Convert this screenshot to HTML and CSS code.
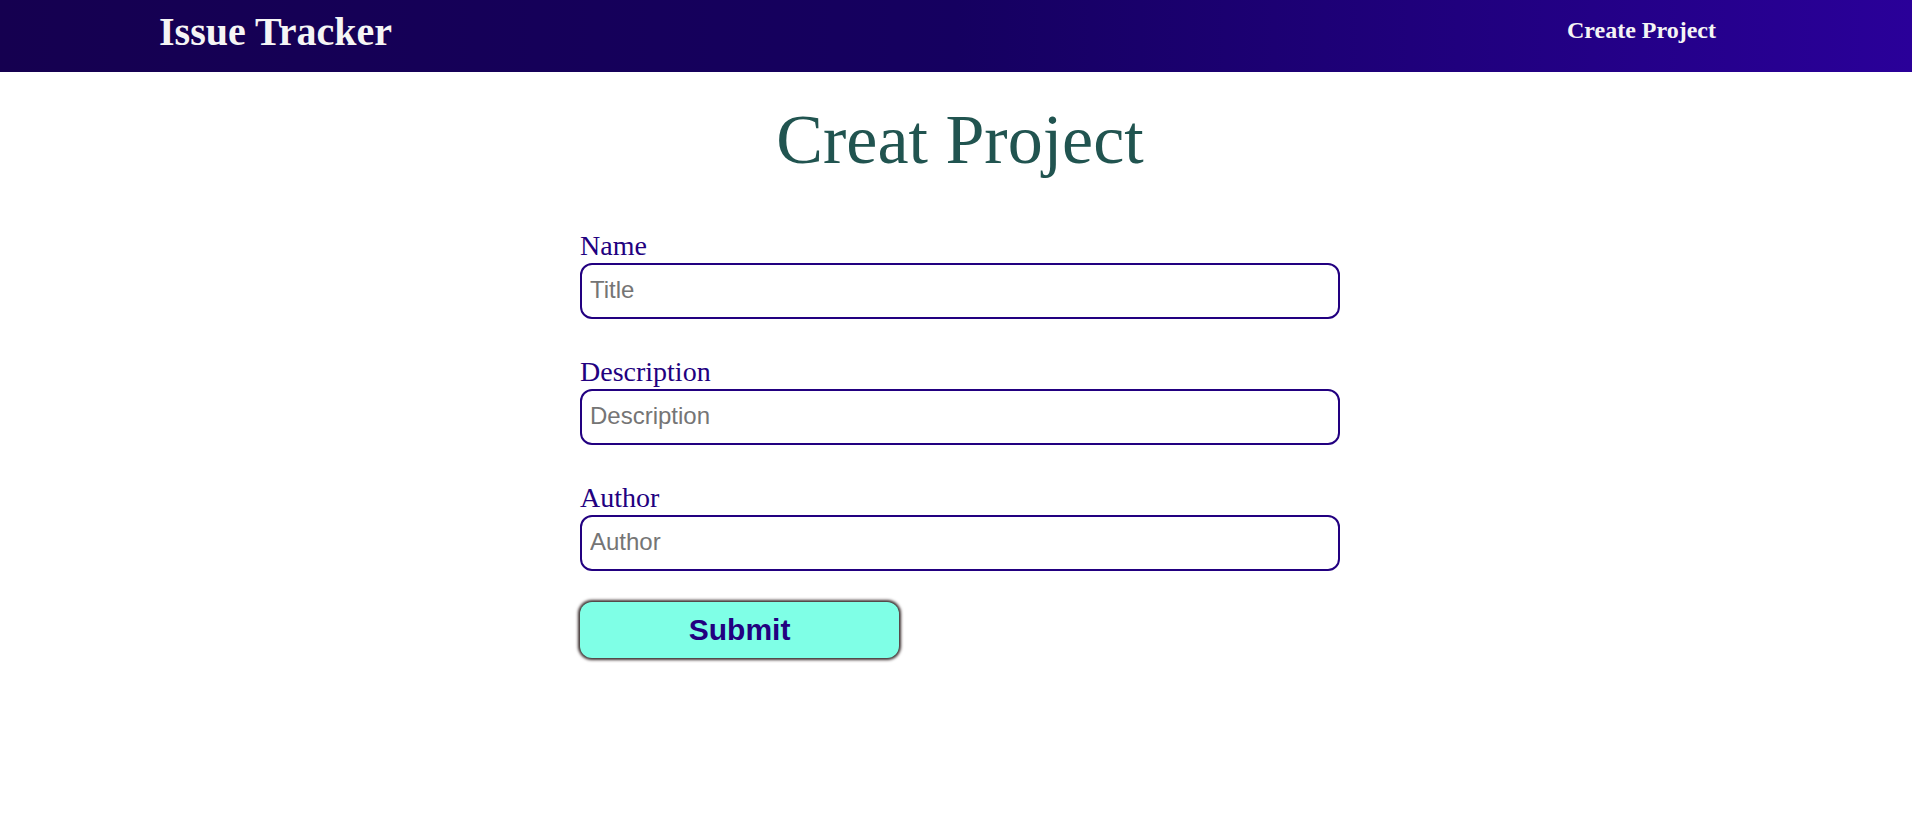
FILE: index.html
```html
<!DOCTYPE html>
<html lang="en">
<head>
<meta charset="utf-8">
<title>Issue Tracker</title>
<link rel="stylesheet" href="styles.css">
</head>
<body>
<header class="header">
  <h1 class="brand">Issue Tracker</h1>
  <nav><a class="nav-link" href="#create">Create Project</a></nav>
</header>
<main class="main" id="create">
  <h2 class="title">Creat Project</h2>
  <form class="form">
    <div class="fields">
      <div class="field">
        <label class="label" for="name">Name</label>
        <input class="input" id="name" type="text" placeholder="Title">
      </div>
      <div class="field">
        <label class="label" for="description">Description</label>
        <input class="input" id="description" type="text" placeholder="Description">
      </div>
      <div class="field">
        <label class="label" for="author">Author</label>
        <input class="input" id="author" type="text" placeholder="Author">
      </div>
    </div>
    <button class="submit" type="submit">Submit</button>
  </form>
</main>
</body>
</html>
```

FILE: styles.css
```css
* {
  box-sizing: border-box;
}

body {
  margin: 0;
  font-family: "Liberation Serif", "Times New Roman", serif;
  background: #fff;
}

.header {
  display: flex;
  justify-content: space-between;
  padding: 8px 196px 16px 159px;
  background: linear-gradient(to right, #150050, #150060 50%, #2a0099);
  color: #f5f5f5;
}

.brand {
  margin: 0;
  font-size: 40px;
  line-height: 48px;
}

.nav-link {
  color: #f5f5f5;
  font-size: 24px;
  line-height: 44px;
  font-weight: bold;
  text-decoration: none;
}

.main {
  max-width: 768px;
  margin: 0 auto;
  padding: 0 0 32px 8px;
}

.title {
  margin: 28px 0 49px;
  color: #215450;
  font-size: 70px;
  line-height: 80px;
  font-weight: normal;
  text-align: center;
}

.form {
  display: flex;
  flex-direction: column;
  align-items: flex-start;
  gap: 31px;
}

.fields {
  display: flex;
  flex-direction: column;
  gap: 36px;
  width: 100%;
}

.label {
  display: block;
  color: #220080;
  font-size: 28px;
  line-height: 34px;
}

.input {
  display: block;
  width: 100%;
  height: 56px;
  padding: 0 8px 2px;
  border: 2px solid #220080;
  border-radius: 12px;
  font: 24px "Liberation Sans", Arial, sans-serif;
}

.submit {
  width: 42%;
  height: 56px;
  border: 0;
  border-radius: 12px;
  background: #7fffe6;
  box-shadow: 0 0 3px 2px #3a2e2e;
  color: #220080;
  font: bold 30px "Liberation Sans", Arial, sans-serif;
}
```
